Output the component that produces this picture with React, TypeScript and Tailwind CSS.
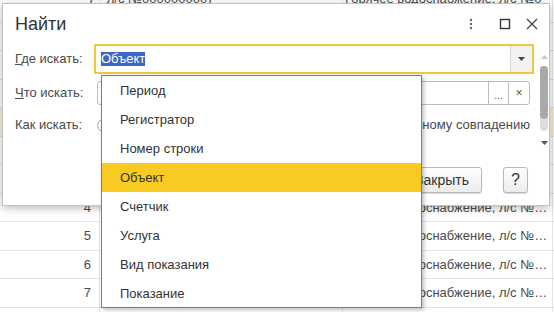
const rows = [
  { n: '', text: '' },
  { n: '', text: '' },
  { n: '', text: '' },
  { n: '', text: '', sel: true },
  { n: '', text: '' },
  { n: '', text: '' },
  { n: '4', text: 'Горячее водоснабжение, л/с №0000000004' },
  { n: '5', text: 'Горячее водоснабжение, л/с №0000000005' },
  { n: '6', text: 'Горячее водоснабжение, л/с №0000000006' },
  { n: '7', text: 'Горячее водоснабжение, л/с №0000000007' },
  { n: '', text: '' },
];

const items = ['Период', 'Регистратор', 'Номер строки', 'Объект', 'Счетчик', 'Услуга', 'Вид показания', 'Показание'];

function Radio({ checked, label }: { checked?: boolean; label: string }) {
  return (
    <div className="flex items-center gap-[5px]">
      <span className="w-[13px] h-[13px] rounded-full border border-[#a8a8a8] bg-white flex items-center justify-center">
        {checked && <span className="w-[5px] h-[5px] rounded-full bg-[#444]" />}
      </span>
      <span>{label}</span>
    </div>
  );
}

export default function App() {
  return (
    <div className="relative w-[554px] h-[312px] overflow-hidden bg-white text-[13px] text-[#4a4a4a] font-['Liberation_Sans',Arial,sans-serif]">
      {/* table behind the dialog */}
      <div className="flex flex-col">
        <div className="h-[22.5px] flex border-b border-[#e4e4e4]">
          <div className="w-[343px] shrink-0 border-r border-[#e4e4e4] pl-[88px] -mt-[9px] leading-[15px]">7 - л/с №0000000007</div>
          <div className="w-[210px] shrink-0 border-r border-[#e4e4e4] pl-[2px] -mt-[9px] leading-[15px] whitespace-nowrap overflow-hidden">Горячее водоснабжение, л/с №0</div>
        </div>
        {rows.map((r, i) => (
          <div key={i} className={`h-[28.5px] flex items-center border-b border-[#e4e4e4] ${r.sel ? 'bg-[#fbf0d2]' : ''}`}>
            <div className="w-[100px] shrink-0 text-right pr-[8px] self-stretch flex items-center justify-end border-r border-[#e4e4e4]">{r.n}</div>
            <div className="w-[243px] shrink-0 self-stretch border-r border-[#e4e4e4]" />
            <div className="w-[210px] shrink-0 self-stretch pl-[2px] pr-[1px] border-r border-[#e4e4e4] leading-[28px] truncate">
              {r.text}
            </div>
          </div>
        ))}
      </div>

      {/* dialog */}
      <div className="absolute left-[2px] top-[3px] w-[548px] h-[203px] bg-white border border-[#c4c4c4] shadow-[0_2px_8px_rgba(0,0,0,0.28)] flex flex-col">
        <div className="h-[40px] flex items-center justify-between pl-[12px] pr-[11px]">
          <span className="text-[18px] text-[#333]">Найти</span>
          <div className="flex items-center">
            <svg width="6" height="12" viewBox="0 0 6 12">
              <circle cx="3" cy="2" r="1.2" fill="#666" />
              <circle cx="3" cy="6" r="1.2" fill="#666" />
              <circle cx="3" cy="10" r="1.2" fill="#666" />
            </svg>
            <svg width="12" height="12" viewBox="0 0 12 12" className="ml-[25px]">
              <rect x="1.5" y="1.5" width="9" height="9" fill="none" stroke="#333" strokeWidth="1.4" />
            </svg>
            <svg width="12" height="12" viewBox="0 0 12 12" className="ml-[15px]">
              <path d="M1 1 L11 11 M11 1 L1 11" stroke="#444" strokeWidth="1.3" />
            </svg>
          </div>
        </div>

        <div className="flex flex-1 min-w-0">
          {/* form */}
          <div className="flex-1 min-w-0 flex flex-col pl-[12px] pr-[4px]">
            <div className="h-[30px] flex items-center">
              <span className="w-[79px] shrink-0"><span className="underline">Г</span>де искать:</span>
              <div className="w-[440px] shrink-0 h-[30px] border-2 border-[#efc83c] flex items-stretch">
                <div className="flex-1 flex items-center pl-[5px]">
                  <span className="bg-[#3d67c6] text-white leading-[14px]">Объект</span>
                </div>
                <div className="w-[22px] bg-[#f2f2f2] border-l border-[#d4d4d4] flex items-center justify-center">
                  <svg width="7" height="4" viewBox="0 0 7 4"><path d="M0 0 H7 L3.5 4 Z" fill="#444" /></svg>
                </div>
              </div>
            </div>

            <div className="h-[24px] mt-[7px] flex items-center">
              <span className="w-[82px] shrink-0"><span className="underline">Ч</span>то искать:</span>
              <div className="w-[433px] shrink-0 h-[24px] border border-[#bdbdbd] rounded-[3px] flex">
                <div className="flex-1" />
                <div className="w-[20px] border-l border-[#bdbdbd] flex items-end justify-center pb-[3px] text-[10px] leading-[10px] text-[#555]">...</div>
                <div className="w-[21px] border-l border-[#bdbdbd] flex items-center justify-center text-[12px] text-[#555]">×</div>
              </div>
            </div>

            <div className="h-[24px] mt-[8px] flex items-center">
              <span className="w-[82px] shrink-0">Как искать:</span>
              <div className="w-[433px] shrink-0 flex items-center justify-between">
                <Radio label="По началу строки" />
                <Radio checked label="По точному совпадению" />
              </div>
            </div>

            <div className="mt-[30px] pr-[7px] flex justify-end gap-[21px]">
              <button className="w-[80px] h-[26px] rounded-[3px] border border-[#b8b8b8] bg-gradient-to-b from-[#ffffff] to-[#ececec] shadow-[0_1px_1px_rgba(0,0,0,0.15)] text-[14px] text-[#333]">Закрыть</button>
              <button className="w-[25px] h-[26px] rounded-[3px] border border-[#b8b8b8] bg-gradient-to-b from-[#ffffff] to-[#ececec] shadow-[0_1px_1px_rgba(0,0,0,0.15)] text-[16px] text-[#333]">?</button>
            </div>
          </div>

          {/* scrollbar */}
          <div className="w-[10px] shrink-0 flex flex-col items-center pt-[11px]">
            <svg width="7" height="4" viewBox="0 0 7 4"><path d="M0 4 H7 L3.5 0 Z" fill="#c8c8c8" /></svg>
            <div className="mt-[7px] w-[8px] h-[65px] rounded-[4px] bg-[#dedede] flex flex-col">
              <div className="h-[53px] rounded-[4px] bg-[#a9a9a9]" />
            </div>
            <svg width="7" height="4" viewBox="0 0 7 4" className="mt-[10px]"><path d="M0 0 H7 L3.5 4 Z" fill="#555" /></svg>
          </div>
        </div>
      </div>

      {/* dropdown list */}
      <div className="absolute left-[101px] top-[75px] w-[321px] h-[233px] bg-white border border-[#7d7d7d] shadow-[2px_2px_4px_rgba(0,0,0,0.25)] flex flex-col text-[#333]">
        {items.map((it) => (
          <div key={it} className={`h-[29px] shrink-0 flex items-center pl-[18px] ${it === 'Объект' ? 'bg-[#f8ca22]' : ''}`}>
            {it}
          </div>
        ))}
      </div>
    </div>
  );
}
